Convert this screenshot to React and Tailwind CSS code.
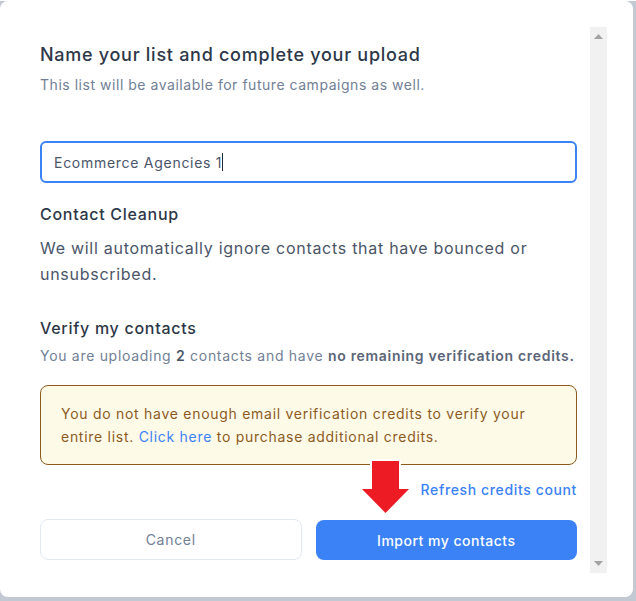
import React from 'react';

const ScrollTrack = () => (
    <div className="w-[17px] h-[546px] bg-[#f1f1f1] flex flex-col items-center justify-between py-[7px] shrink-0">
        <svg width="9" height="5" viewBox="0 0 9 5"><polygon points="0,5 9,5 4.5,0" fill="#a3a3a3" /></svg>
        <svg width="9" height="5" viewBox="0 0 9 5"><polygon points="0,0 9,0 4.5,5" fill="#a3a3a3" /></svg>
    </div>
);

const App = () => {
    return (
        <div className="w-full h-[601px] bg-[#c3c9d3] relative tracking-[0.045em]" style={{ fontFamily: 'Inter, "Noto Sans", sans-serif' }}>
            <div className="w-[633px] h-[596px] mt-px bg-white rounded-lg pt-[26px] overflow-hidden">
                <div className="flex">
                    {/* scroll content */}
                    <div className="w-[590px] pl-10 pr-[13px] pt-[14px] shrink-0">
                        <h2 className="text-[18px] leading-[28px] font-medium text-[#2d3748]">Name your list and complete your upload</h2>
                        <p className="mt-1.5 text-[14px] leading-5 text-[#718096] tracking-[0.038em]">This list will be available for future campaigns as well.</p>

                        <div className="mt-[46px] h-[42px] border-2 border-[#3b82f6] rounded-md px-3 flex items-center text-[14px] text-[#4a5568]">
                            Ecommerce Agencies 1<span className="inline-block w-px h-[18px] bg-[#1f2937]"></span>
                        </div>

                        <h3 className="mt-[19px] text-[16px] leading-6 font-medium text-[#2d3748]">Contact Cleanup</h3>
                        <p className="mt-[9px] text-[16px] leading-[26px] text-[#4a5568]">We will automatically ignore contacts that have bounced or unsubscribed.</p>

                        <h3 className="mt-[29px] text-[16px] leading-6 font-medium text-[#2d3748]">Verify my contacts</h3>
                        <p className="mt-1.5 text-[14px] leading-5 text-[#718096] tracking-[0.05em] whitespace-nowrap">
                            You are uploading <span className="font-semibold text-[#4a5568]">2</span> contacts and have <span className="font-semibold text-[#5a6577]">no remaining verification credits.</span>
                        </p>

                        <div className="mt-[19px] border border-[#8d5a1e] bg-[#fefae8] rounded-lg px-5 py-4 text-[14px] leading-[23px] text-[#8d5a1e]">
                            You do not have enough email verification credits to verify your entire list. <span className="text-[#3b82f6]">Click here</span> to purchase additional credits.
                        </div>

                        <div className="mt-[15px] flex justify-end">
                            <span className="text-[14px] leading-5 font-medium text-[#3b82f6] tracking-[0.045em]">Refresh credits count</span>
                        </div>

                        <div className="mt-[19px] grid grid-cols-2 gap-[14px]">
                            <button className="h-[41px] border border-[#e2e8f0] rounded-lg bg-white text-[14px] text-[#718096]">Cancel</button>
                            <button className="h-[40px] mt-px rounded-lg bg-[#3b82f6] text-[14px] font-medium text-white tracking-[0.035em]">Import my contacts</button>
                        </div>
                    </div>
                    <ScrollTrack />
                </div>
            </div>

            {/* annotation arrow */}
            <svg className="absolute left-[358px] top-[456px]" width="56" height="60" viewBox="358 456 56 60">
                <polygon
                    points="372,460 399,460 399,488 409,488 385.5,512 362,488 372,488"
                    fill="#ed1c24"
                    stroke="white"
                    strokeWidth="4"
                    strokeLinejoin="miter"
                    style={{ paintOrder: 'stroke' }}
                />
            </svg>
        </div>
    );
};

export default App;
